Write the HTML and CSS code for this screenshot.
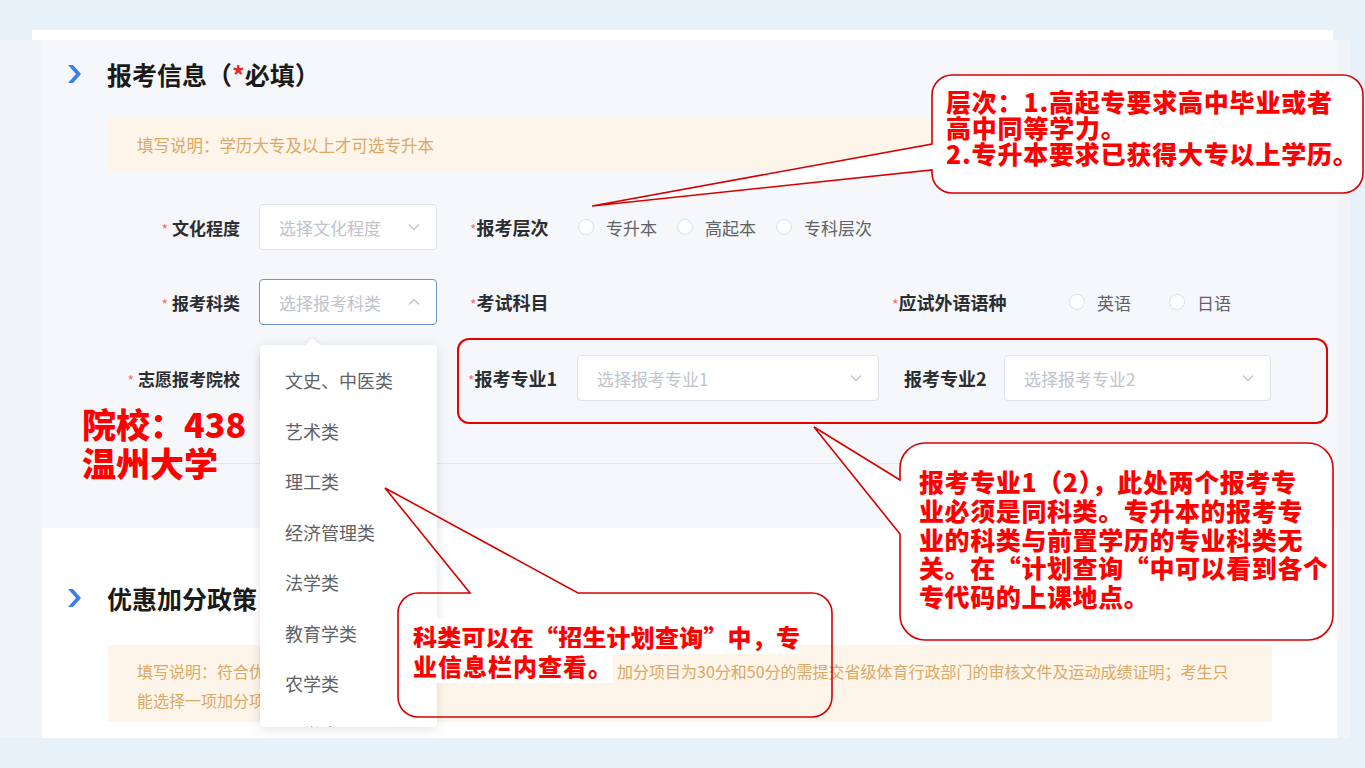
FILE: index.html
```html
<!DOCTYPE html>
<html lang="zh-CN">
<head>
    <meta charset="UTF-8">
    <meta name="viewport" content="width=device-width, initial-scale=1.0">
    <title>报考信息</title>
    <link rel="stylesheet" href="styles.css">
</head>
<body>
    <div class="topline"></div>
    <div class="frame">
        <main class="content">
            <section class="sec sec-info">
                <div class="sec-head">
                    <svg class="chev" viewBox="0 0 13 18"><polygon points="0,0 5,0 13,9 5,18 0,18 8,9"/></svg>
                    <h2>报考信息（<span class="req">*</span>必填）</h2>
                </div>
                <div class="notice">填写说明：学历大专及以上才可选专升本</div>

                <div class="form-row row1">
                    <div class="label"><span class="star">*</span> 文化程度</div>
                    <div class="select">
                        <span>选择文化程度</span>
                        <svg class="arrow" viewBox="0 0 12 8"><path d="M1 1.5 L6 6.5 L11 1.5"/></svg>
                    </div>
                    <div class="field-label fl-level"><span class="star">*</span>报考层次</div>
                    <div class="radio radio-first"><i></i>专升本</div>
                    <div class="radio"><i></i>高起本</div>
                    <div class="radio"><i></i>专科层次</div>
                </div>

                <div class="form-row row2">
                    <div class="label"><span class="star">*</span> 报考科类</div>
                    <div class="select active">
                        <span>选择报考科类</span>
                        <svg class="arrow" viewBox="0 0 12 8"><path d="M1 6.5 L6 1.5 L11 6.5"/></svg>
                    </div>
                    <div class="field-label fl-subject"><span class="star">*</span>考试科目</div>
                    <div class="field-label fl-lang"><span class="star">*</span>应试外语语种</div>
                    <div class="radio radio-first"><i></i>英语</div>
                    <div class="radio radio-lang2"><i></i>日语</div>
                </div>

                <div class="form-row row3">
                    <div class="label"><span class="star">*</span> 志愿报考院校</div>
                    <!-- covered by the open dropdown -->
                    <div class="select"></div>
                    <div class="field-label fl-major1"><span class="star">*</span>报考专业1</div>
                    <div class="select select-major1">
                        <span>选择报考专业1</span>
                        <svg class="arrow" viewBox="0 0 12 8"><path d="M1 1.5 L6 6.5 L11 1.5"/></svg>
                    </div>
                    <div class="field-label fl-major2">报考专业2</div>
                    <div class="select select-major2">
                        <span>选择报考专业2</span>
                        <svg class="arrow" viewBox="0 0 12 8"><path d="M1 1.5 L6 6.5 L11 1.5"/></svg>
                    </div>
                </div>
                <div class="divider"></div>
            </section>

            <section class="sec sec-bonus">
                <div class="sec-head">
                    <svg class="chev" viewBox="0 0 13 18"><polygon points="0,0 5,0 13,9 5,18 0,18 8,9"/></svg>
                    <h2>优惠加分政策</h2>
                </div>
                <div class="notice notice-multi">填写说明：符合优惠加分条件的考生，须如实填写相关的加分信息。加分项目为30分和50分的需提交省级体育行政部门的审核文件及运动成绩证明；考生只<br>能选择一项加分项目进行申报。</div>
            </section>
        </main>
    </div>

    <!-- dropdown of 报考科类 -->
    <div class="dropdown">
        <ul class="dropdown-list">
            <li>文史、中医类</li>
            <li>艺术类</li>
            <li>理工类</li>
            <li>经济管理类</li>
            <li>法学类</li>
            <li>教育学类</li>
            <li>农学类</li>
            <li>医学类</li>
        </ul>
    </div>

    <!-- annotations -->
    <div class="hl-box"></div>
    <div class="school-note">院校：438<br>温州大学</div>

    <svg class="callouts" viewBox="0 0 1365 768">
        <path class="bubble" d="M952 75 H1343 A20 20 0 0 1 1363 95 V173 A20 20 0 0 1 1343 193 H952 A20 20 0 0 1 932 173 V170 L592 206 L932 144 V95 A20 20 0 0 1 952 75 Z"/>
        <path class="bubble" d="M925 443 H1308 A25 25 0 0 1 1333 468 V615 A25 25 0 0 1 1308 640 H925 A25 25 0 0 1 900 615 V534 L814 427 L900 480 V468 A25 25 0 0 1 925 443 Z"/>
        <path class="bubble open" d="M418 593 H470 L385 488 L578 593 H812 A20 20 0 0 1 832 613 V697 A20 20 0 0 1 812 717 H418 A20 20 0 0 1 398 697 V613 A20 20 0 0 1 418 593 Z"/>
    </svg>

    <div class="callout-text ct1">层次：1.高起专要求高中毕业或者<br>高中同等学力。<br>2.专升本要求已获得大专以上学历。</div>
    <div class="callout-text ct3">报考专业1（2），此处两个报考专<br>业必须是同科类。专升本的报考专<br>业的科类与前置学历的专业科类无<br>关。在“计划查询“中可以看到各个<br>专代码的上课地点。</div>
    <div class="callout-text ct2"><span>科类可以在“招生计划查询”中，专</span><br><span class="ct2-end">业信息栏内查看。</span></div>
</body>
</html>
```

FILE: styles.css
```css
*{
    margin:0;
    padding:0;
    box-sizing:border-box;
}
body{
    width:1365px;
    height:768px;
    overflow:hidden;
    position:relative;
    background-color:#e8f1f9;
    font-family:"Noto Sans CJK SC", "Noto Sans", sans-serif;
}
.topline{
    margin:30px 0 0 32px;
    width:1301px;
    height:10px;
    background-color:#fff;
}
.frame{
    display:flex;
    width:1350px;
    height:698px;
    background-color:#f1f4f8;
}
.content{
    margin-left:42px;
    width:1295px;
    display:flex;
    flex-direction:column;
}
.sec{
    padding:0 65px 0 66px;
}
.sec-info{
    height:488px;
    padding-top:20px;
    background-color:#f5f7fa;
}
.sec-bonus{
    flex:1;
    padding-top:56px;
    background-color:#fff;
}
.sec-head{
    display:flex;
    align-items:center;
    height:28px;
    margin-left:-40px;
}
.chev{
    width:13px;
    height:18px;
    margin-right:26px;
    fill:#3b7ef0;
}
.sec-head h2{
    font-size:25px;
    line-height:28px;
    font-weight:700;
    color:#1a1a1a;
}
.req{
    color:#e02b2b;
}
.notice{
    margin-top:30px;
    height:54px;
    display:flex;
    align-items:center;
    padding-left:29px;
    background-color:#fdf5e9;
    color:#dca866;
    font-size:16.5px;
    white-space:nowrap;
}
.notice-multi{
    display:block;
    margin-top:33px;
    height:77px;
    padding-top:12px;
    font-size:16px;
    line-height:29px;
    overflow:hidden;
}

/* form rows */
.form-row{
    display:flex;
    align-items:center;
    height:46px;
}
.row1{ margin-top:32px; }
.row2{ margin-top:29px; }
.row3{ margin-top:30px; }
.label{
    flex:none;
    width:132px;
    text-align:right;
    font-size:17px;
    font-weight:700;
    color:#2b2d31;
    white-space:nowrap;
}
.star{
    color:#f56c6c;
    font-weight:400;
    font-size:14px;
}
.select{
    flex:none;
    width:178px;
    height:46px;
    margin-left:19px;
    padding:0 16px 0 19px;
    display:flex;
    align-items:center;
    justify-content:space-between;
    background-color:#fff;
    border:1px solid #dfe2e8;
    border-radius:4px;
    font-size:17px;
    color:#c0c4cc;
    white-space:nowrap;
}
.select.active{
    border-color:#7097cb;
}
.arrow{
    width:12px;
    height:8px;
    fill:none;
    stroke:#c0c4cc;
    stroke-width:1.3;
}
.field-label{
    flex:none;
    font-size:18px;
    font-weight:700;
    color:#2b2d31;
    white-space:nowrap;
}
.fl-level{ margin-left:33px; width:108px; }
.fl-subject{ margin-left:33px; width:422px; }
.fl-lang{ width:177px; }
.fl-major1{ margin-left:31px; width:109px; }
.fl-major2{ margin-left:25px; width:100px; }
.select-major1{ width:302px; margin-left:0; }
.select-major2{ width:267px; margin-left:0; }
.radio{
    display:flex;
    align-items:center;
    margin-left:20px;
    font-size:17px;
    color:#606266;
    white-space:nowrap;
}
.radio i{
    width:16px;
    height:16px;
    margin-right:12px;
    border:1px solid #dcdfe6;
    border-radius:50%;
    background-color:#fff;
}
.radio.radio-first{ margin-left:0; }
.radio-lang2{ margin-left:38px; }
.divider{
    margin-top:62px;
    border-top:1px solid #e4e7ed;
}

/* dropdown */
.dropdown{
    position:absolute;
    left:260px;
    top:345px;
    width:177px;
    height:382px;
    background-color:#fff;
    border-radius:4px;
    box-shadow:0 2px 12px rgba(0,0,0,0.12);
}
.dropdown::before{
    content:"";
    position:absolute;
    top:-5px;
    left:47px;
    width:11px;
    height:11px;
    background-color:#fff;
    transform:rotate(45deg);
    box-shadow:-2px -2px 3px rgba(0,0,0,0.04);
}
.dropdown-list{
    position:relative;
    height:100%;
    overflow:hidden;
    padding-top:10px;
    list-style:none;
    border-radius:4px;
}
.dropdown-list li{
    height:50.5px;
    line-height:50.5px;
    padding-left:25px;
    font-size:18px;
    color:#606266;
}

/* annotations */
.hl-box{
    position:absolute;
    left:457px;
    top:338px;
    width:871px;
    height:86px;
    border:2.5px solid #e60000;
    border-radius:12px;
}
.school-note{
    position:absolute;
    left:82px;
    top:404px;
    font-size:34px;
    line-height:39px;
    font-weight:900;
    color:#f00;
}
.callouts{
    position:absolute;
    left:0;
    top:0;
    width:1365px;
    height:768px;
}
.bubble{
    fill:#fff;
    stroke:#d80000;
    stroke-width:1.6;
}
.bubble.open{
    fill:none;
}
.callout-text{
    position:absolute;
    color:#f00;
    font-weight:900;
    white-space:nowrap;
}
.ct1{
    left:946px;
    top:88px;
    font-size:25px;
    line-height:26px;
    letter-spacing:0.8px;
}
.ct3{
    left:919px;
    top:467px;
    font-size:25px;
    line-height:28.75px;
    letter-spacing:0.6px;
}
.ct2{
    left:413px;
    top:622px;
    font-size:24px;
    line-height:29px;
    letter-spacing:0.2px;
}
.ct2 span{
    background-color:#fff;
}
.ct2 .ct2-end{
    letter-spacing:1px;
}
```
